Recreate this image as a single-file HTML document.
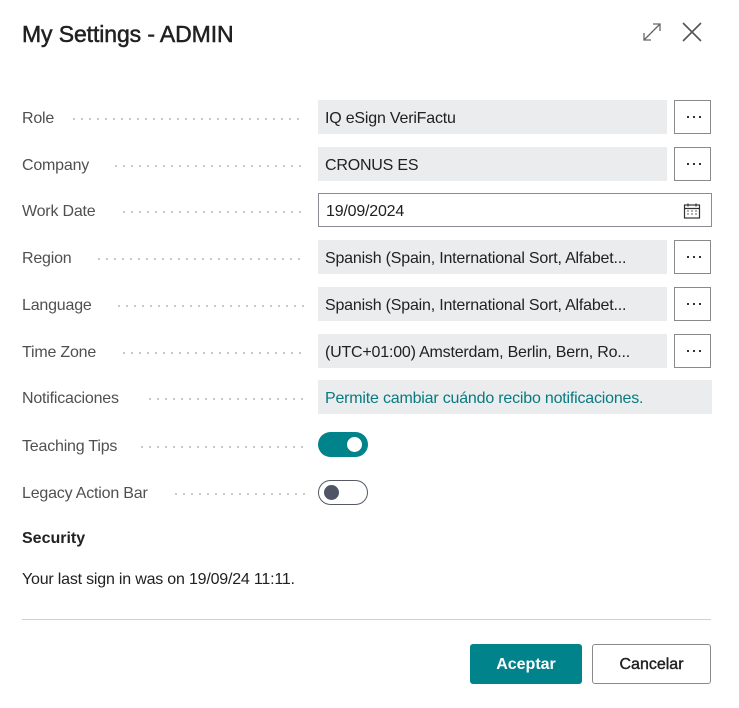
<!DOCTYPE html>
<html><head><style>
*{box-sizing:border-box;margin:0;padding:0}
body{width:739px;height:708px;background:#fff;font-family:"Liberation Sans",sans-serif;color:#212121;position:relative;overflow:hidden}
.t{position:absolute;left:22px;top:21px;font-size:23px;font-weight:400;-webkit-text-stroke:0.5px #212121;letter-spacing:-0.1px}
.row{position:absolute;left:0;width:739px;height:34px}
.lab{position:absolute;left:22px;top:10px;font-size:16px;color:#505050;letter-spacing:-0.2px}
.dots{position:absolute;right:434px;top:18px;height:2px;background:radial-gradient(circle,#bdbdbd 0.9px,transparent 1.1px) 0 0/8px 2px repeat-x}
.f{position:absolute;left:318px;top:0;width:349px;height:34px;background:#ebecee;padding:10px 7px;font-size:16px;white-space:nowrap;overflow:hidden;letter-spacing:-0.2px}
.b{position:absolute;left:674px;top:0;width:37px;height:34px;border:1px solid #8a8a8a}
.b::after{content:"";position:absolute;left:10px;top:15px;width:16px;height:2px;background:radial-gradient(circle,#222 1px,transparent 1.2px) 0 0/6px 2px repeat-x}
.tog{position:absolute;left:318px;width:50px;height:25px;border-radius:13px}
</style></head><body>
<div class="t">My Settings - ADMIN</div>
<svg style="position:absolute;left:640px;top:20px" width="24" height="24" viewBox="0 0 24 24" fill="none" stroke="#666" stroke-width="1.3"><path d="M4 20L20 4M13 4h7v7M4 13v7h7"/></svg>
<svg style="position:absolute;left:680px;top:20px" width="24" height="24" viewBox="0 0 24 24" fill="none" stroke="#555" stroke-width="1.6"><path d="M3 3L21 21M21 3L3 21"/></svg>

<div class="row" style="top:100px"><span class="lab">Role</span><span class="dots" style="left:70px"></span><div class="f">IQ eSign VeriFactu</div><div class="b"></div></div>
<div class="row" style="top:147px"><span class="lab">Company</span><span class="dots" style="left:112px"></span><div class="f">CRONUS ES</div><div class="b"></div></div>
<div class="row" style="top:193px"><span class="lab">Work Date</span><span class="dots" style="left:120px"></span><div class="f" style="width:394px;background:#fff;border:1px solid #8a8e94;padding:9px 7px">19/09/2024</div>
<svg style="position:absolute;left:683px;top:9px" width="18" height="18" viewBox="0 0 18 18" fill="none" stroke="#333" stroke-width="1.2"><rect x="1.5" y="3" width="15" height="13"/><path d="M1.5 6.5h15M5 1.5v3M13 1.5v3"/><path d="M4.5 9h1M8.5 9h1M12.5 9h1M4.5 12h1M8.5 12h1M12.5 12h1" stroke-width="1.5"/></svg></div>
<div class="row" style="top:240px"><span class="lab">Region</span><span class="dots" style="left:95px"></span><div class="f">Spanish (Spain, International Sort, Alfabet...</div><div class="b"></div></div>
<div class="row" style="top:287px"><span class="lab">Language</span><span class="dots" style="left:115px"></span><div class="f">Spanish (Spain, International Sort, Alfabet...</div><div class="b"></div></div>
<div class="row" style="top:334px"><span class="lab">Time Zone</span><span class="dots" style="left:120px"></span><div class="f">(UTC+01:00) Amsterdam, Berlin, Bern, Ro...</div><div class="b"></div></div>
<div class="row" style="top:380px"><span class="lab">Notificaciones</span><span class="dots" style="left:146px"></span><div class="f" style="width:394px;color:#077b7f">Permite cambiar cuándo recibo notificaciones.</div></div>
<div class="row" style="top:428px"><span class="lab">Teaching Tips</span><span class="dots" style="left:138px"></span><div class="tog" style="top:4px;background:#00838a"><div style="position:absolute;left:29px;top:5px;width:15px;height:15px;border-radius:50%;background:#fff"></div></div></div>
<div class="row" style="top:475px"><span class="lab">Legacy Action Bar</span><span class="dots" style="left:172px"></span><div class="tog" style="top:5px;border:1px solid #555a66"><div style="position:absolute;left:5px;top:4px;width:15px;height:15px;border-radius:50%;background:#4f5566"></div></div></div>

<div style="position:absolute;left:22px;top:530px;font-size:16px;font-weight:700">Security</div>
<div style="position:absolute;left:22px;top:571px;font-size:16px;letter-spacing:-0.2px">Your last sign in was on 19/09/24 11:11.</div>
<div style="position:absolute;left:22px;top:619px;width:689px;height:1px;background:#d0d0d0"></div>
<div style="position:absolute;left:470px;top:644px;width:112px;height:40px;background:#00838a;border-radius:3px;color:#fff;font-weight:700;font-size:16px;text-align:center;line-height:42px">Aceptar</div>
<div style="position:absolute;left:592px;top:644px;width:119px;height:40px;border:1px solid #8a8a8a;border-radius:3px;font-size:16px;-webkit-text-stroke:0.4px #212121;text-align:center;line-height:40px">Cancelar</div>
</body></html>
